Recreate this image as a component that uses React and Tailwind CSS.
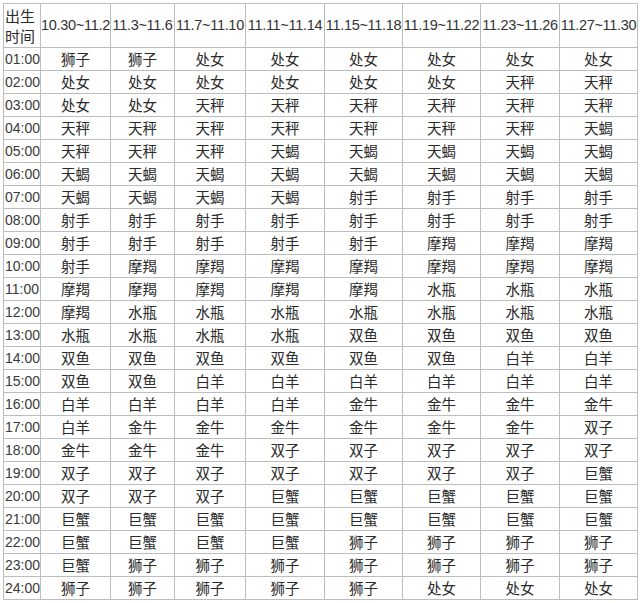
const cols = [
	"10.30~11.2",
	"11.3~11.6",
	"11.7~11.10",
	"11.11~11.14",
	"11.15~11.18",
	"11.19~11.22",
	"11.23~11.26",
	"11.27~11.30",
];

const widths = [37, 70, 64, 71, 79, 78, 78, 79, 78];

const rows = [
	"狮子 狮子 处女 处女 处女 处女 处女 处女",
	"处女 处女 处女 处女 处女 处女 天秤 天秤",
	"处女 处女 天秤 天秤 天秤 天秤 天秤 天秤",
	"天秤 天秤 天秤 天秤 天秤 天秤 天秤 天蝎",
	"天秤 天秤 天秤 天蝎 天蝎 天蝎 天蝎 天蝎",
	"天蝎 天蝎 天蝎 天蝎 天蝎 天蝎 天蝎 天蝎",
	"天蝎 天蝎 天蝎 天蝎 射手 射手 射手 射手",
	"射手 射手 射手 射手 射手 射手 射手 射手",
	"射手 射手 射手 射手 射手 摩羯 摩羯 摩羯",
	"射手 摩羯 摩羯 摩羯 摩羯 摩羯 摩羯 摩羯",
	"摩羯 摩羯 摩羯 摩羯 摩羯 水瓶 水瓶 水瓶",
	"摩羯 水瓶 水瓶 水瓶 水瓶 水瓶 水瓶 水瓶",
	"水瓶 水瓶 水瓶 水瓶 双鱼 双鱼 双鱼 双鱼",
	"双鱼 双鱼 双鱼 双鱼 双鱼 双鱼 白羊 白羊",
	"双鱼 双鱼 白羊 白羊 白羊 白羊 白羊 白羊",
	"白羊 白羊 白羊 白羊 金牛 金牛 金牛 金牛",
	"白羊 金牛 金牛 金牛 金牛 金牛 金牛 双子",
	"金牛 金牛 金牛 双子 双子 双子 双子 双子",
	"双子 双子 双子 双子 双子 双子 双子 巨蟹",
	"双子 双子 双子 巨蟹 巨蟹 巨蟹 巨蟹 巨蟹",
	"巨蟹 巨蟹 巨蟹 巨蟹 巨蟹 巨蟹 巨蟹 巨蟹",
	"巨蟹 巨蟹 巨蟹 巨蟹 狮子 狮子 狮子 狮子",
	"巨蟹 狮子 狮子 狮子 狮子 狮子 狮子 狮子",
	"狮子 狮子 狮子 狮子 狮子 处女 处女 处女",
].map((r) => r.split(" "));

const hour = (i) => String(i + 1).padStart(2, "0") + ":00";

export default function App() {
	return (
		<div className="w-[640px] h-[603px] bg-white p-[3px] font-['Liberation_Sans','Noto_Sans_CJK_SC',sans-serif] text-[#2b2b2b]">
			<table className="table-fixed border-collapse w-[634px] border border-[#c4c4c4]">
				<colgroup>
					{widths.map((w, i) => (
						<col key={i} style={{ width: w }} />
					))}
				</colgroup>
				<thead>
					<tr className="h-[44px]">
						<th className="border border-[#bdbdbd] px-px text-left font-normal text-[15px] leading-[20px] font-['Noto_Sans_CJK_SC',sans-serif] whitespace-nowrap">
							出生
							<br />
							时间
						</th>
						{cols.map((c) => (
							<th
								key={c}
								className="border border-[#bdbdbd] p-0 font-normal text-[14.5px] whitespace-nowrap text-center tracking-[-0.3px] text-[#333]"
							>
								{c}
							</th>
						))}
					</tr>
				</thead>
				<tbody>
					{rows.map((r, i) => (
						<tr key={i} className="h-[23px]">
							<td className="border border-[#bdbdbd] px-px text-[14px] leading-none text-[#3a3a3a] whitespace-nowrap">
								{hour(i)}
							</td>
							{r.map((s, j) => (
								<td
									key={j}
									className="border border-[#bdbdbd] p-0 text-center text-[14.5px] leading-none font-['Noto_Sans_CJK_SC',sans-serif]"
								>
									{s}
								</td>
							))}
						</tr>
					))}
				</tbody>
			</table>
		</div>
	);
}
